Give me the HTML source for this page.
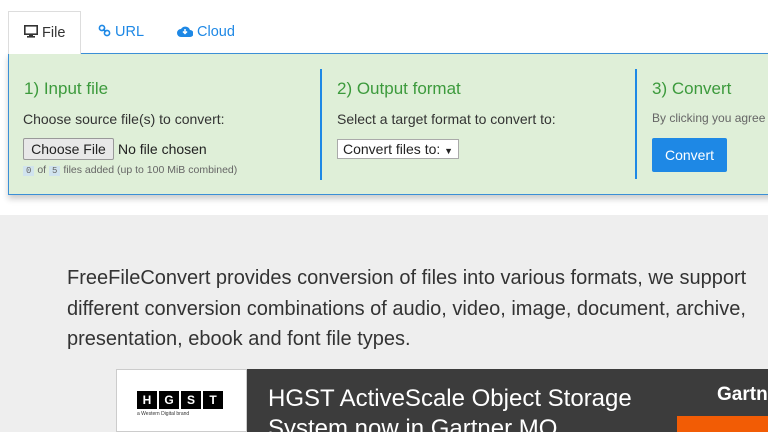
<!DOCTYPE html>
<html><head><style>
*{margin:0;padding:0;box-sizing:border-box}
body{width:768px;height:432px;overflow:hidden;background:#fff;font-family:"Liberation Sans",Arial,sans-serif;position:relative}
.abs{position:absolute}
.tab{top:11px;height:43px;font-size:14.5px;line-height:42px;color:#1e88e5}
.panel{left:8px;top:53px;width:780px;height:142px;background:#dfefd8;border:1px solid #3b8fd6;box-shadow:0 4px 6px rgba(0,0,0,.2)}
h3{position:absolute;font-weight:normal;font-size:17px;color:#3c9a3c}
.t{position:absolute;font-size:14px;color:#333;white-space:nowrap}
.vb{position:absolute;width:2px;background:#1e88e5}
</style></head><body>
<div class="abs tab" style="left:8px;width:73px;border:1px solid #ddd;border-bottom:none;background:#fff;color:#333;padding-left:15px;z-index:2">
<svg width="14" height="13" style="vertical-align:-1px" viewBox="0 0 14 13"><rect x="0.8" y="0.8" width="12.4" height="8.4" fill="none" stroke="#333" stroke-width="1.6"/><rect x="5" y="9" width="4" height="2" fill="#333"/><rect x="3" y="11" width="8" height="1.6" fill="#333"/></svg> File</div>
<div class="abs tab" style="left:98px">
<svg width="13" height="13" viewBox="0 0 13 13" style="vertical-align:-1px"><circle cx="4" cy="4" r="2.6" fill="none" stroke="#1e88e5" stroke-width="1.6"/><circle cx="9" cy="9" r="2.6" fill="none" stroke="#1e88e5" stroke-width="1.6"/><line x1="5" y1="5" x2="8" y2="8" stroke="#1e88e5" stroke-width="1.6"/></svg> URL</div>
<div class="abs tab" style="left:177px">
<svg width="16" height="12" viewBox="0 0 16 12" style="vertical-align:-1px"><path d="M4 12a4 4 0 0 1 0-8a5 5 0 0 1 9 1a3.5 3.5 0 0 1 0 7z" fill="#1e88e5"/><path d="M8 4v4M6 6.5l2 2l2-2" stroke="#fff" stroke-width="1.5" fill="none"/></svg> Cloud</div>
<div class="abs panel"></div>
<h3 style="left:24px;top:79px">1) Input file</h3>
<div class="t" style="left:23px;top:111px">Choose source file(s) to convert:</div>
<div class="abs" style="left:23px;top:138px;width:91px;height:22px;background:#e8e8e8;border:1px solid #999;border-radius:2px;font-size:14px;line-height:20px;text-align:center;color:#222">Choose File</div>
<div class="t" style="left:118px;top:141px;color:#222">No file chosen</div>
<div class="abs" style="left:23px;top:164px;font-size:10.5px;color:#666;white-space:nowrap"><span style="background:#d0e3ee;padding:0 3px;font-family:'Liberation Mono';font-size:9px">0</span> of <span style="background:#d0e3ee;padding:0 3px;font-family:'Liberation Mono';font-size:9px">5</span> files added (up to 100 MiB combined)</div>
<div class="vb" style="left:320px;top:69px;height:111px"></div>
<h3 style="left:337px;top:79px">2) Output format</h3>
<div class="t" style="left:337px;top:111px">Select a target format to convert to:</div>
<div class="abs" style="left:337px;top:139px;width:122px;height:20px;background:#fff;border:1px solid #aaa;font-size:14px;line-height:18px;padding-left:5px;color:#222;white-space:nowrap">Convert files to: <span style="font-size:9px">▼</span></div>
<div class="vb" style="left:635px;top:69px;height:110px"></div>
<h3 style="left:652px;top:79px">3) Convert</h3>
<div class="abs" style="left:652px;top:111px;font-size:12px;color:#666;white-space:nowrap">By clicking you agree to</div>
<div class="abs" style="left:652px;top:138px;width:75px;height:34px;background:#1e88e5;border-radius:2px;color:#fff;font-size:14px;line-height:34px;text-align:center">Convert</div>
<div class="abs" style="left:0;top:215px;width:768px;height:217px;background:#eee"></div>
<div class="abs" style="left:67px;top:263px;font-size:20px;line-height:30.5px;color:#333;white-space:nowrap">FreeFileConvert provides conversion of files into various formats, we support<br>different conversion combinations of audio, video, image, document, archive,<br>presentation, ebook and font file types.</div>
<div class="abs" style="left:116px;top:369px;width:131px;height:63px;background:#fff;border:1px solid #ccc"></div>
<div class="abs" style="left:137px;top:391px;display:flex;gap:2px">
<span style="background:#000;color:#fff;font-weight:bold;font-size:12px;width:20px;height:18px;text-align:center;line-height:18px">H</span><span style="background:#000;color:#fff;font-weight:bold;font-size:12px;width:20px;height:18px;text-align:center;line-height:18px">G</span><span style="background:#000;color:#fff;font-weight:bold;font-size:12px;width:20px;height:18px;text-align:center;line-height:18px">S</span><span style="background:#000;color:#fff;font-weight:bold;font-size:12px;width:20px;height:18px;text-align:center;line-height:18px">T</span></div>
<div class="abs" style="left:137px;top:411px;font-size:5px;color:#333">a Western Digital brand</div>
<div class="abs" style="left:247px;top:369px;width:521px;height:63px;background:#3c3c3c"></div>
<div class="abs" style="left:268px;top:384px;font-size:24px;line-height:30px;color:#fff;white-space:nowrap">HGST ActiveScale Object Storage<br>System now in Gartner MQ</div>
<div class="abs" style="left:717px;top:384px;font-size:19px;font-weight:bold;color:#fff">Gartn</div>
<div class="abs" style="left:677px;top:416px;width:91px;height:16px;background:#f25c05"></div>
</body></html>
